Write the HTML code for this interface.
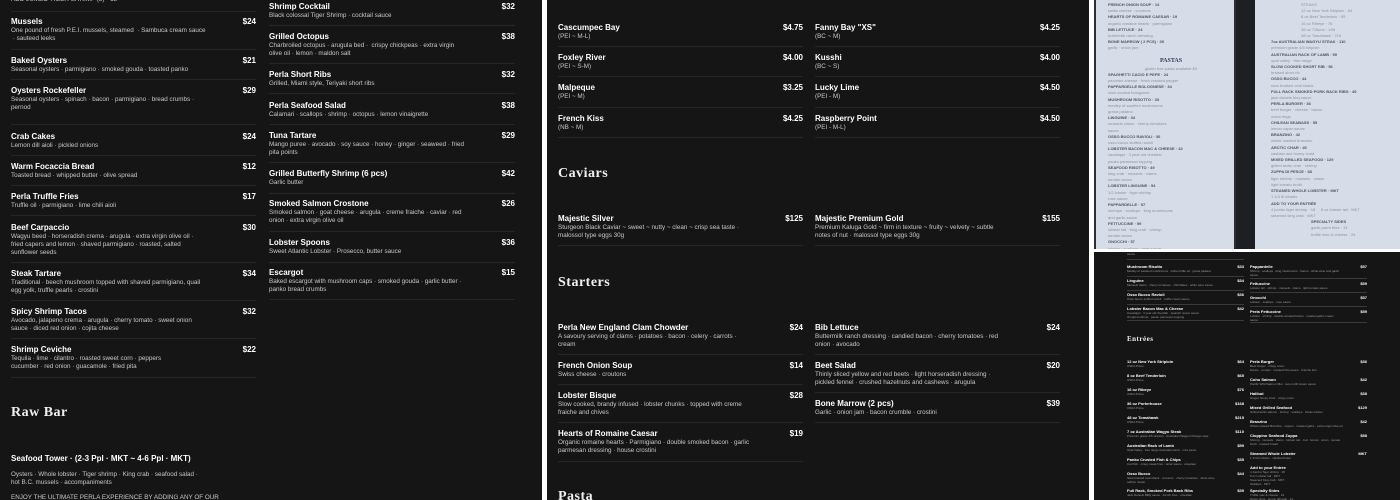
<!DOCTYPE html>
<html><head><meta charset="utf-8"><style>
*{margin:0;padding:0;box-sizing:border-box}
body{width:1400px;height:500px;background:#fff;position:relative;overflow:hidden;font-family:"Liberation Sans",Arial,sans-serif}
.pn{position:absolute;background:#151515;overflow:hidden}
.it{position:absolute;color:#fff}
.n{font-weight:bold;font-size:8px;line-height:10px;white-space:nowrap}
.p{position:absolute;top:0;font-weight:bold;font-size:8px;line-height:10px;text-align:right}
.d{font-size:6.3px;line-height:8px;color:#c9c9c9;white-space:nowrap}
.hr{position:absolute;height:1px;background:#3a3a3a;border-bottom:1px solid #262626}
.hd{position:absolute;font-family:"Liberation Serif",serif;font-weight:bold;font-size:14px;color:#f0f0f0;letter-spacing:.5px}
.t .n{font-size:4px;line-height:5px}
.t .p{font-size:4px;line-height:5px}
.t .d{font-size:3px;line-height:4px;color:#999}
.pp{position:absolute;background:#d6dde8;overflow:hidden;color:#8a93a0;font-size:4px;line-height:6.2px;white-space:nowrap}
.pp b{color:#4c5564}
</style></head><body>

<!-- LEFT PANEL -->
<div class="pn" style="left:0;top:0;width:542px;height:500px">
<div class="it" style="left:11px;top:-4px"><div class="d">ADD JUMBO TIGER SHRIMP (3) · 18</div></div>
<div class="hr" style="left:11px;width:245px;top:11px"></div>

<div class="it" style="left:11px;top:17px;width:245px"><div class="n">Mussels</div><div class="p" style="right:0">$24</div><div class="d">One pound of fresh P.E.I. mussels, steamed &nbsp;· Sambuca cream sauce<br>&nbsp;· sauteed leeks</div></div>
<div class="hr" style="left:11px;width:245px;top:49px"></div>
<div class="it" style="left:11px;top:56px;width:245px"><div class="n">Baked Oysters</div><div class="p" style="right:0">$21</div><div class="d">Seasonal oysters · parmigiano · smoked gouda · toasted panko</div></div>
<div class="hr" style="left:11px;width:245px;top:79px"></div>
<div class="it" style="left:11px;top:86px;width:245px"><div class="n">Oysters Rockefeller</div><div class="p" style="right:0">$29</div><div class="d">Seasonal oysters · spinach · bacon · parmigiano · bread crumbs ·<br>pernod</div></div>
<div class="hr" style="left:11px;width:245px;top:124px"></div>
<div class="it" style="left:11px;top:132px;width:245px"><div class="n">Crab Cakes</div><div class="p" style="right:0">$24</div><div class="d">Lemon dill aioli · pickled onions</div></div>
<div class="hr" style="left:11px;width:245px;top:155px"></div>
<div class="it" style="left:11px;top:162px;width:245px"><div class="n">Warm Focaccia Bread</div><div class="p" style="right:0">$12</div><div class="d">Toasted bread · whipped butter · olive spread</div></div>
<div class="hr" style="left:11px;width:245px;top:185px"></div>
<div class="it" style="left:11px;top:192px;width:245px"><div class="n">Perla Truffle Fries</div><div class="p" style="right:0">$17</div><div class="d">Truffle oil · parmigiano · lime chili aioli</div></div>
<div class="hr" style="left:11px;width:245px;top:215px"></div>
<div class="it" style="left:11px;top:223px;width:245px"><div class="n">Beef Carpaccio</div><div class="p" style="right:0">$30</div><div class="d">Wagyu beed · horseradish crema · arugula · extra virgin olive oil ·<br>fried capers and lemon · shaved parmigiano · roasted, salted<br>sunflower seeds</div></div>
<div class="hr" style="left:11px;width:245px;top:262px"></div>
<div class="it" style="left:11px;top:269px;width:245px"><div class="n">Steak Tartare</div><div class="p" style="right:0">$34</div><div class="d">Traditional · beech mushroom topped with shaved parmigiano, quail<br>egg yolk, truffle pearls · crostini</div></div>
<div class="hr" style="left:11px;width:245px;top:300px"></div>
<div class="it" style="left:11px;top:307px;width:245px"><div class="n">Spicy Shrimp Tacos</div><div class="p" style="right:0">$32</div><div class="d">Avocado, jalapeno crema · arugula · cherry tomato · sweet onion<br>sauce · diced red onion · cojita cheese</div></div>
<div class="hr" style="left:11px;width:245px;top:338px"></div>
<div class="it" style="left:11px;top:345px;width:245px"><div class="n">Shrimp Ceviche</div><div class="p" style="right:0">$22</div><div class="d">Tequila · lime · cilantro · roasted sweet corn · peppers<br>cucumber · red onion · guacamole · fried pita</div></div>
<div class="hr" style="left:11px;width:245px;top:377px"></div>
<div class="hd" style="left:11px;top:405px">Raw Bar</div>
<div class="it" style="left:11px;top:454px"><div class="n">Seafood Tower · (2-3 Ppl · MKT ~ 4-6 Ppl · MKT)</div></div>
<div class="it" style="left:11px;top:471px"><div class="d">Oysters · Whole lobster · Tiger shrimp · King crab · seafood salad ·<br>hot B.C. mussels · accompaniments</div></div>
<div class="it" style="left:11px;top:494px"><div class="d">ENJOY THE ULTIMATE PERLA EXPERIENCE BY ADDING ANY OF OUR</div></div>

<div class="it" style="left:269px;top:2px;width:246px"><div class="n">Shrimp Cocktail</div><div class="p" style="right:0">$32</div><div class="d">Black colossal Tiger Shrimp · cocktail sauce</div></div>
<div class="hr" style="left:269px;width:246px;top:25px"></div>
<div class="it" style="left:269px;top:32px;width:246px"><div class="n">Grilled Octopus</div><div class="p" style="right:0">$38</div><div class="d">Charbroiled octopus · arugula bed · &nbsp;crispy chickpeas · extra virgin<br>olive oil · lemon · maldon salt</div></div>
<div class="hr" style="left:269px;width:246px;top:63px"></div>
<div class="it" style="left:269px;top:70px;width:246px"><div class="n">Perla Short Ribs</div><div class="p" style="right:0">$32</div><div class="d">Grilled, Miami style, Teriyaki short ribs</div></div>
<div class="hr" style="left:269px;width:246px;top:93px"></div>
<div class="it" style="left:269px;top:101px;width:246px"><div class="n">Perla Seafood Salad</div><div class="p" style="right:0">$38</div><div class="d">Calamari · scallops · shrimp · octopus · lemon vinaigrette</div></div>
<div class="hr" style="left:269px;width:246px;top:124px"></div>
<div class="it" style="left:269px;top:131px;width:246px"><div class="n">Tuna Tartare</div><div class="p" style="right:0">$29</div><div class="d">Mango puree · avocado · soy sauce · honey · ginger · seaweed · fried<br>pita points</div></div>
<div class="hr" style="left:269px;width:246px;top:162px"></div>
<div class="it" style="left:269px;top:169px;width:246px"><div class="n">Grilled Butterfly Shrimp (6 pcs)</div><div class="p" style="right:0">$42</div><div class="d">Garlic butter</div></div>
<div class="hr" style="left:269px;width:246px;top:193px"></div>
<div class="it" style="left:269px;top:199px;width:246px"><div class="n">Smoked Salmon Crostone</div><div class="p" style="right:0">$26</div><div class="d">Smoked salmon · goat cheese · arugula · creme fraiche · caviar · red<br>onion · extra virgin olive oil</div></div>
<div class="hr" style="left:269px;width:246px;top:231px"></div>
<div class="it" style="left:269px;top:238px;width:246px"><div class="n">Lobster Spoons</div><div class="p" style="right:0">$36</div><div class="d">Sweet Atlantic Lobster · Prosecco, butter sauce</div></div>
<div class="hr" style="left:269px;width:246px;top:262px"></div>
<div class="it" style="left:269px;top:268px;width:246px"><div class="n">Escargot</div><div class="p" style="right:0">$15</div><div class="d">Baked escargot with mushroom caps · smoked gouda · garlic butter ·<br>panko bread crumbs</div></div>
<div class="hr" style="left:269px;width:246px;top:299px"></div>
</div>

<!-- MIDDLE PANEL -->
<div class="pn" style="left:547px;top:0;width:542px;height:500px">
<div class="it" style="left:11px;top:23px;width:245px"><div class="n">Cascumpec Bay</div><div class="p" style="right:0">$4.75</div><div class="d">(PEI ~ M-L)</div></div>
<div class="hr" style="left:11px;width:245px;top:46px"></div>
<div class="it" style="left:11px;top:53px;width:245px"><div class="n">Foxley River</div><div class="p" style="right:0">$4.00</div><div class="d">(PEI ~ S-M)</div></div>
<div class="hr" style="left:11px;width:245px;top:76px"></div>
<div class="it" style="left:11px;top:83px;width:245px"><div class="n">Malpeque</div><div class="p" style="right:0">$3.25</div><div class="d">(PEI ~ M)</div></div>
<div class="hr" style="left:11px;width:245px;top:107px"></div>
<div class="it" style="left:11px;top:114px;width:245px"><div class="n">French Kiss</div><div class="p" style="right:0">$4.25</div><div class="d">(NB ~ M)</div></div>
<div class="hr" style="left:11px;width:245px;top:137px"></div>

<div class="it" style="left:268px;top:23px;width:245px"><div class="n">Fanny Bay "XS"</div><div class="p" style="right:0">$4.25</div><div class="d">(BC ~ M)</div></div>
<div class="hr" style="left:268px;width:245px;top:46px"></div>
<div class="it" style="left:268px;top:53px;width:245px"><div class="n">Kusshi</div><div class="p" style="right:0">$4.00</div><div class="d">(BC ~ S)</div></div>
<div class="hr" style="left:268px;width:245px;top:76px"></div>
<div class="it" style="left:268px;top:83px;width:245px"><div class="n">Lucky Lime</div><div class="p" style="right:0">$4.50</div><div class="d">(PEI - M)</div></div>
<div class="hr" style="left:268px;width:245px;top:107px"></div>
<div class="it" style="left:268px;top:114px;width:245px"><div class="n">Raspberry Point</div><div class="p" style="right:0">$4.50</div><div class="d">(PEI - M-L)</div></div>
<div class="hr" style="left:268px;width:245px;top:137px"></div>

<div class="hd" style="left:11px;top:166px">Caviars</div>
<div class="it" style="left:11px;top:214px;width:245px"><div class="n">Majestic Silver</div><div class="p" style="right:0">$125</div><div class="d">Sturgeon Black Caviar ~ sweet ~ nutty ~ clean ~ crisp sea taste ·<br>malossol type eggs 30g</div></div>
<div class="hr" style="left:11px;width:245px;top:245px"></div>
<div class="it" style="left:268px;top:214px;width:245px"><div class="n">Majestic Premium Gold</div><div class="p" style="right:0">$155</div><div class="d">Premium Kaluga Gold ~ firm in texture ~ fruity ~ velvety ~ subtle<br>notes of nut · malossol type eggs 30g</div></div>
<div class="hr" style="left:268px;width:245px;top:245px"></div>

<div class="hd" style="left:11px;top:275px">Starters</div>
<div class="it" style="left:11px;top:323px;width:245px"><div class="n">Perla New England Clam Chowder</div><div class="p" style="right:0">$24</div><div class="d">A savoury serving of clams · potatoes · bacon · celery · carrots ·<br>cream</div></div>
<div class="hr" style="left:11px;width:245px;top:354px"></div>
<div class="it" style="left:11px;top:361px;width:245px"><div class="n">French Onion Soup</div><div class="p" style="right:0">$14</div><div class="d">Swiss cheese · croutons</div></div>
<div class="hr" style="left:11px;width:245px;top:384px"></div>
<div class="it" style="left:11px;top:391px;width:245px"><div class="n">Lobster Bisque</div><div class="p" style="right:0">$28</div><div class="d">Slow cooked, brandy infused · lobster chunks · topped with creme<br>fraiche and chives</div></div>
<div class="hr" style="left:11px;width:245px;top:422px"></div>
<div class="it" style="left:11px;top:429px;width:245px"><div class="n">Hearts of Romaine Caesar</div><div class="p" style="right:0">$19</div><div class="d">Organic romaine hearts · Parmigiano · double smoked bacon · garlic<br>parmesan dressing · house crostini</div></div>
<div class="hr" style="left:11px;width:245px;top:461px"></div>
<div class="it" style="left:268px;top:323px;width:245px"><div class="n">Bib Lettuce</div><div class="p" style="right:0">$24</div><div class="d">Buttermilk ranch dressing · candied bacon · cherry tomatoes · red<br>onion · avocado</div></div>
<div class="hr" style="left:268px;width:245px;top:354px"></div>
<div class="it" style="left:268px;top:361px;width:245px"><div class="n">Beet Salad</div><div class="p" style="right:0">$20</div><div class="d">Thinly sliced yellow and red beets · light horseradish dressing ·<br>pickled fennel · crushed hazelnuts and cashews · arugula</div></div>
<div class="hr" style="left:268px;width:245px;top:392px"></div>
<div class="it" style="left:268px;top:399px;width:245px"><div class="n">Bone Marrow (2 pcs)</div><div class="p" style="right:0">$39</div><div class="d">Garlic · onion jam · bacon crumble · crostini</div></div>
<div class="hr" style="left:268px;width:245px;top:422px"></div>
<div class="hd" style="left:11px;top:489px">Pasta</div>
</div>

<!-- RIGHT TOP PHOTO -->
<div style="position:absolute;left:1094px;top:0;width:306px;height:249px;background:#2b2e33;overflow:hidden">
 <div style="position:absolute;left:142px;top:0;width:20px;height:249px;background:#1d1f23"></div>
 <div class="pp" style="left:2px;top:0;width:138px;height:249px;padding:2px 0 0 12px">
  <div><b>FRENCH ONION SOUP · 14</b></div><div>swiss cheese · croutons</div>
  <div><b>HEARTS OF ROMAINE CAESAR · 19</b></div><div>organic romaine hearts · parmigiano</div>
  <div><b>BIB LETTUCE · 24</b></div><div>buttermilk ranch dressing</div>
  <div><b>BONE MARROW ( 2 PCS) · 39</b></div><div>garlic · onion jam</div>
  <div style="text-align:center;font-family:'Liberation Serif',serif;font-weight:bold;font-size:6px;line-height:10px;color:#2e3a55;margin-top:4px">PASTAS</div>
  <div style="text-align:center">gluten free pasta available $3</div>
  <div><b>SPAGHETTI CACIO E PEPE · 24</b></div><div>pecorino cheese · fresh cracked pepper</div>
  <div><b>PAPPARDELLE BOLOGNESE · 34</b></div><div>slow cooked bolognese</div>
  <div><b>MUSHROOM RISOTTO · 33</b></div><div>medley of sautéed mushrooms</div><div>grana padano</div>
  <div><b>LINGUINE · 34</b></div><div>mussels clams · cherry tomatoes</div><div>sauce</div>
  <div><b>OSSO BUCCO RAVIOLI · 36</b></div><div>osso bucco stuffed ravioli</div>
  <div><b>LOBSTER BACON MAC &amp; CHEESE · 42</b></div><div>cavatappi · 3 year old cheddar</div><div>panko parmesan topping</div>
  <div><b>SEAFOOD RISOTTO · 49</b></div><div>king crab · mussels · clams</div><div>tomato sauce</div>
  <div><b>LOBSTER LINGUINE · 54</b></div><div>1/2 lobster · tiger shrimp</div><div>rose sauce</div>
  <div><b>PAPPARDELLE · 57</b></div><div>shrimps · scallops · king mushrooms</div><div>and garlic sauce</div>
  <div><b>FETTUCCINE · 59</b></div><div>lobster tail · king crab · shrimp</div><div>tomato sauce</div>
  <div><b>GNOCCHI · 57</b></div><div>lobster · scallops · rosé sauce</div>
 </div>
 <div class="pp" style="left:161px;top:0;width:150px;height:249px;padding:2px 0 0 16px">
  <div style="padding-left:30px">STEAKS</div><div style="padding-left:30px">12 oz New York Striploin · 64</div><div style="padding-left:30px">8 oz Beef Tenderloin · 65</div><div style="padding-left:30px">16 oz Ribeye · 76</div><div style="padding-left:30px">36 oz T-Bone · 168</div><div style="padding-left:30px">48 oz Tomahawk · 215</div>
  <div><b>7oz AUSTRALIAN WAGYU STEAK · 110</b></div><div>premium grade 4/5 striploin</div>
  <div><b>AUSTRALIAN RACK OF LAMB · 59</b></div><div>opal valley · free range</div>
  <div><b>SLOW COOKED SHORT RIB · 56</b></div><div>braised short rib</div>
  <div><b>OSSO BUCCO · 44</b></div><div>slow braised veal shank</div>
  <div><b>FULL RACK SMOKED PORK BACK RIBS · 49</b></div><div>jack daniels bbq sauce</div>
  <div><b>PERLA BURGER · 36</b></div><div>beef burger · cheese · bacon</div><div>onion rings</div>
  <div><b>CHILEAN SEABASS · 55</b></div><div>lemon caper sauce</div>
  <div><b>BRANZINO · 42</b></div><div>whole roasted branzino</div>
  <div><b>ARCTIC CHAR · 40</b></div><div>cashew and honey crust</div>
  <div><b>MIXED GRILLED SEAFOOD · 129</b></div><div>grilled arctic char · shrimp</div>
  <div><b>ZUPPA DI PESCE · 68</b></div><div>tiger shrimp · mussels · clams</div><div>light tomato broth</div>
  <div><b>STEAMED WHOLE LOBSTER · MKT</b></div><div>1 1/4 lb lobster</div>
  <div><b>ADD TO YOUR ENTRÉE</b></div><div>4 jumbo tiger shrimp · 18 &nbsp; &nbsp; 8 oz lobster tail · MKT</div>
  <div>steamed king crab · MKT</div>
  <div style="padding-left:40px"><b>SPECIALTY SIDES</b></div><div style="padding-left:40px">garlic parm fries · 14</div><div style="padding-left:40px">truffle mac &amp; cheese · 24</div>
 </div>
</div>

<!-- RIGHT BOTTOM SCREENSHOT -->
<div class="pn t" style="left:1094px;top:252px;width:306px;height:248px">
<div class="it" style="left:33px;top:0;width:117px"><div class="d">sauce</div></div>
<div class="hr" style="left:33px;width:117px;top:7px;height:1px;border:0"></div>
<div class="it" style="left:33px;top:12px;width:117px"><div class="n">Mushroom Risotto</div><div class="p" style="right:0">$33</div><div class="d">Medley of sautéed mushrooms · white truffle oil · grana padano</div></div>
<div class="hr" style="left:33px;width:117px;top:24px;height:1px;border:0"></div>
<div class="it" style="left:33px;top:26px;width:117px"><div class="n">Linguine</div><div class="p" style="right:0">$34</div><div class="d">Mussels clams · cherry tomatoes · chili flakes · white wine sauce</div></div>
<div class="hr" style="left:33px;width:117px;top:38px;height:1px;border:0"></div>
<div class="it" style="left:33px;top:40px;width:117px"><div class="n">Osso Bucco Ravioli</div><div class="p" style="right:0">$36</div><div class="d">Osso bucco stuffed ravioli · truffle cream sauce</div></div>
<div class="hr" style="left:33px;width:117px;top:52px;height:1px;border:0"></div>
<div class="it" style="left:33px;top:54px;width:117px"><div class="n">Lobster Bacon Mac &amp; Cheese</div><div class="p" style="right:0">$42</div><div class="d">Cavatappi · 3 year old cheddar · spanish cream sauce<br>chopped shrimp · panko parmesan topping</div></div>
<div class="hr" style="left:33px;width:117px;top:68px;height:1px;border:0"></div>

<div class="it" style="left:156px;top:12px;width:117px"><div class="n">Pappardelle</div><div class="p" style="right:0">$57</div><div class="d">Shrimp · scallops · king mushrooms · bacon · white wine and garlic<br>sauce</div></div>
<div class="hr" style="left:156px;width:117px;top:26px;height:1px;border:0"></div>
<div class="it" style="left:156px;top:29px;width:117px"><div class="n">Fettuccine</div><div class="p" style="right:0">$59</div><div class="d">Lobster tail · shrimp · mussels · clams · light tomato sauce</div></div>
<div class="hr" style="left:156px;width:117px;top:40px;height:1px;border:0"></div>
<div class="it" style="left:156px;top:43px;width:117px"><div class="n">Gnocchi</div><div class="p" style="right:0">$57</div><div class="d">Lobster · scallops · rosé sauce</div></div>
<div class="hr" style="left:156px;width:117px;top:54px;height:1px;border:0"></div>
<div class="it" style="left:156px;top:57px;width:117px"><div class="n">Perla Fettuccine</div><div class="p" style="right:0">$59</div><div class="d">Lobster · shrimp · double smoked bacon · roasted garlic cream<br>sauce</div></div>
<div class="hr" style="left:156px;width:117px;top:70px;height:1px;border:0"></div>

<div class="hd" style="left:33px;top:83px;font-size:7px">Entrées</div>

<div class="it" style="left:33px;top:107px;width:117px"><div class="n">12 oz New York Striploin</div><div class="p" style="right:0">$64</div><div class="d">USDA Prime</div></div>
<div class="it" style="left:33px;top:121px;width:117px"><div class="n">8 oz Beef Tenderloin</div><div class="p" style="right:0">$65</div><div class="d">USDA Prime</div></div>
<div class="it" style="left:33px;top:135px;width:117px"><div class="n">16 oz Ribeye</div><div class="p" style="right:0">$76</div><div class="d">USDA Prime</div></div>
<div class="it" style="left:33px;top:149px;width:117px"><div class="n">36 oz Porterhouse</div><div class="p" style="right:0">$168</div><div class="d">USDA Prime</div></div>
<div class="it" style="left:33px;top:163px;width:117px"><div class="n">48 oz Tomahawk</div><div class="p" style="right:0">$215</div><div class="d">USDA Prime</div></div>
<div class="it" style="left:33px;top:177px;width:117px"><div class="n">7 oz Australian Wagyu Steak</div><div class="p" style="right:0">$110</div><div class="d">Premium grade 4/5 striploin · Australian Wagyu Chicago style</div></div>
<div class="it" style="left:33px;top:191px;width:117px"><div class="n">Australian Rack of Lamb</div><div class="p" style="right:0">$59</div><div class="d">Opal Valley · free range Australian lamb · mint pesto</div></div>
<div class="it" style="left:33px;top:205px;width:117px"><div class="n">Panko Crusted Fish &amp; Chips</div><div class="p" style="right:0">$35</div><div class="d">Cod fish · crispy steak fries · tartar sauce · coleslaw</div></div>
<div class="it" style="left:33px;top:219px;width:117px"><div class="n">Osso Bucco</div><div class="p" style="right:0">$44</div><div class="d">Slow braised veal shank · croutons · cherry tomatoes · white wine<br>saffron risotto</div></div>
<div class="it" style="left:33px;top:236px;width:117px"><div class="n">Full Rack, Smoked Pork Back Ribs</div><div class="p" style="right:0">$39</div><div class="d">Jack Daniels BBQ sauce · french fries · coleslaw</div></div>

<div class="it" style="left:156px;top:107px;width:117px"><div class="n">Perla Burger</div><div class="p" style="right:0">$36</div><div class="d">Beef burger · crispy onion<br>lettuce · tomato · smoked bbq sauce · brioche bun</div></div>
<div class="it" style="left:156px;top:125px;width:117px"><div class="n">Coho Salmon</div><div class="p" style="right:0">$42</div><div class="d">Pacific Wild Salmon fillet · lemon dill cream sauce</div></div>
<div class="it" style="left:156px;top:139px;width:117px"><div class="n">Halibut</div><div class="p" style="right:0">$38</div><div class="d">Ginger honey crust · crispy onion</div></div>
<div class="it" style="left:156px;top:153px;width:117px"><div class="n">Mixed Grilled Seafood</div><div class="p" style="right:0">$129</div><div class="d">Grilled arctic salmon · shrimp · scallops · whole lobster</div></div>
<div class="it" style="left:156px;top:167px;width:117px"><div class="n">Branzino</div><div class="p" style="right:0">$42</div><div class="d">Whole roasted Branzino · capers · roasted garlic · extra virgin olive oil</div></div>
<div class="it" style="left:156px;top:181px;width:117px"><div class="n">Cioppino Seafood Zuppa</div><div class="p" style="right:0">$58</div><div class="d">Shrimp · mussels · clams · lobster tail · cod · fennel · onion · tomato<br>broth · toasted bread</div></div>
<div class="it" style="left:156px;top:199px;width:117px"><div class="n">Steamed Whole Lobster</div><div class="p" style="right:0">MKT</div><div class="d">1 1/4 lb lobster · clarified butter</div></div>
<div class="it" style="left:156px;top:213px;width:117px"><div class="n">Add to your Entrée</div><div class="d">4 Jumbo Tiger shrimp · 18<br>8 oz Lobster tail · MKT<br>Steamed King crab · MKT<br>Scallops · MKT</div></div>
<div class="it" style="left:156px;top:236px;width:117px"><div class="n">Specialty Sides</div><div class="d">Truffle mac &amp; cheese · 24<br>Onion rings · lemon dill aioli · 14</div></div>
</div>
</body></html>
